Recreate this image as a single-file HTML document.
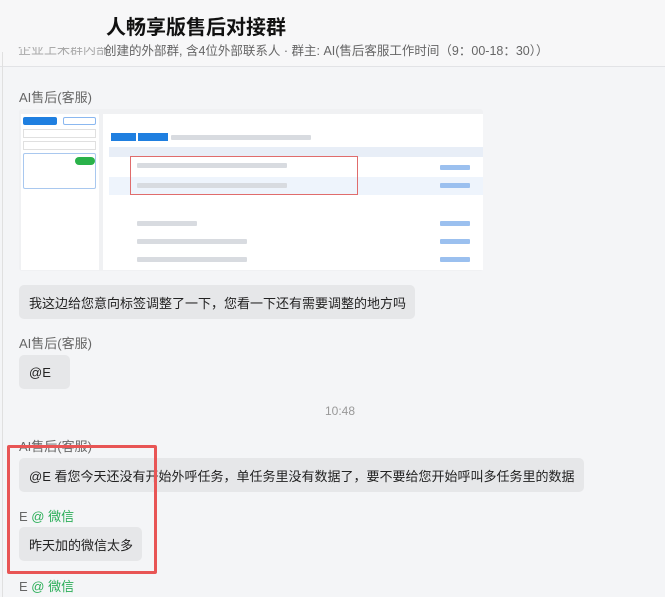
<!DOCTYPE html>
<html><head><meta charset="utf-8"><style>
*{margin:0;padding:0;box-sizing:border-box}
body{width:665px;height:597px;overflow:hidden;background:#f4f5f7;font-family:"Liberation Sans","Noto Sans CJK SC",sans-serif;position:relative;color:#222}
.a{position:absolute;white-space:nowrap}
.lbl{font-size:13px;color:#666}
.bub{position:absolute;background:#e6e7e9;border-radius:5px;font-size:13px;color:#222;padding:0 10px;display:flex;align-items:center;white-space:nowrap}
.g{color:#2bae58}
.t{position:absolute;height:5px;background:#d8dbe0;border-radius:1px}
</style></head><body>
<div class="a" style="left:0;top:0;width:665px;height:67px;background:#f7f7f8;border-bottom:1px solid #e2e3e6"></div>
<div class="a" style="left:2px;top:52px;width:1px;height:545px;background:#e0e0e0"></div>
<div class="a" style="left:106px;top:11px;font-size:20px;font-weight:bold;color:#111">人畅享版售后对接群</div>
<div class="a" style="left:18px;top:47px;height:8px;overflow:hidden"><div style="margin-top:-8px;font-size:13px;color:#aaa">企业上米群内部</div></div>
<div class="a" style="left:104px;top:40px;font-size:12.5px;color:#666">创建的外部群, 含4位外部联系人 · 群主: AI(售后客服工作时间（9：00-18：30））</div>
<div class="a lbl" style="left:19px;top:87px">AI售后(客服)</div>

<div class="a" style="left:19px;top:109px;width:464px;height:162px;background:#f0f1f3;border-radius:3px">
 <div class="a" style="left:2px;top:5px;width:78px;height:156px;background:#fff"></div>
 <div class="a" style="left:4px;top:8px;width:34px;height:8px;background:#1f7fe0;border-radius:2px"></div>
 <div class="a" style="left:44px;top:8px;width:33px;height:8px;border:1px solid #8bb8f0;border-radius:2px"></div>
 <div class="a" style="left:4px;top:20px;width:73px;height:9px;border:1px solid #e0e0e0"></div>
 <div class="a" style="left:4px;top:32px;width:73px;height:9px;border:1px solid #e0e0e0"></div>
 <div class="a" style="left:4px;top:44px;width:73px;height:36px;border:1px solid #a9c8ef;border-radius:2px"></div>
 <div class="a" style="left:56px;top:48px;width:20px;height:8px;background:#2ab24a;border-radius:4px"></div>
 <div class="a" style="left:84px;top:5px;width:380px;height:156px;background:#fff"></div>
 <div class="a" style="left:92px;top:24px;width:25px;height:8px;background:#1f7fe0"></div>
 <div class="a" style="left:119px;top:24px;width:30px;height:8px;background:#1f7fe0"></div>
 <div class="t" style="left:152px;top:26px;width:140px"></div>
 <div class="a" style="left:90px;top:38px;width:374px;height:10px;background:#e8eef7"></div>
 <div class="a" style="left:90px;top:68px;width:374px;height:18px;background:#eef4fc"></div>
 <div class="a" style="left:111px;top:47px;width:228px;height:39px;border:1px solid #e06c6c"></div>
 <div class="t" style="left:118px;top:54px;width:150px"></div><div class="t" style="left:118px;top:74px;width:150px"></div>
 <div class="t" style="left:118px;top:112px;width:60px"></div><div class="t" style="left:118px;top:130px;width:110px"></div>
 <div class="t" style="left:118px;top:148px;width:110px"></div>
 <div class="t" style="left:421px;top:56px;width:30px;background:#9bc0ef"></div><div class="t" style="left:421px;top:74px;width:30px;background:#9bc0ef"></div>
 <div class="t" style="left:421px;top:112px;width:30px;background:#9bc0ef"></div><div class="t" style="left:421px;top:130px;width:30px;background:#9bc0ef"></div>
 <div class="t" style="left:421px;top:148px;width:30px;background:#9bc0ef"></div>
</div>

<div class="bub" style="left:19px;top:285px;width:396px;height:34px">我这边给您意向标签调整了一下，您看一下还有需要调整的地方吗</div>
<div class="a lbl" style="left:19px;top:333px">AI售后(客服)</div>
<div class="bub" style="left:19px;top:355px;width:51px;height:34px">@E</div>
<div class="a" style="left:325px;top:404px;font-size:12px;color:#999">10:48</div>
<div class="a lbl" style="left:19px;top:436px">AI售后(客服)</div>
<div class="bub" style="left:19px;top:458px;width:565px;height:34px">@E 看您今天还没有开始外呼任务，单任务里没有数据了，要不要给您开始呼叫多任务里的数据</div>
<div class="a lbl" style="left:19px;top:506px">E <span class="g">@ 微信</span></div>
<div class="bub" style="left:19px;top:527px;width:123px;height:34px">昨天加的微信太多</div>
<div class="a lbl" style="left:19px;top:576px">E <span class="g">@ 微信</span></div>
<div class="a" style="left:7px;top:445px;width:150px;height:129px;border:3px solid #e85555;border-radius:2px"></div>
</body></html>
